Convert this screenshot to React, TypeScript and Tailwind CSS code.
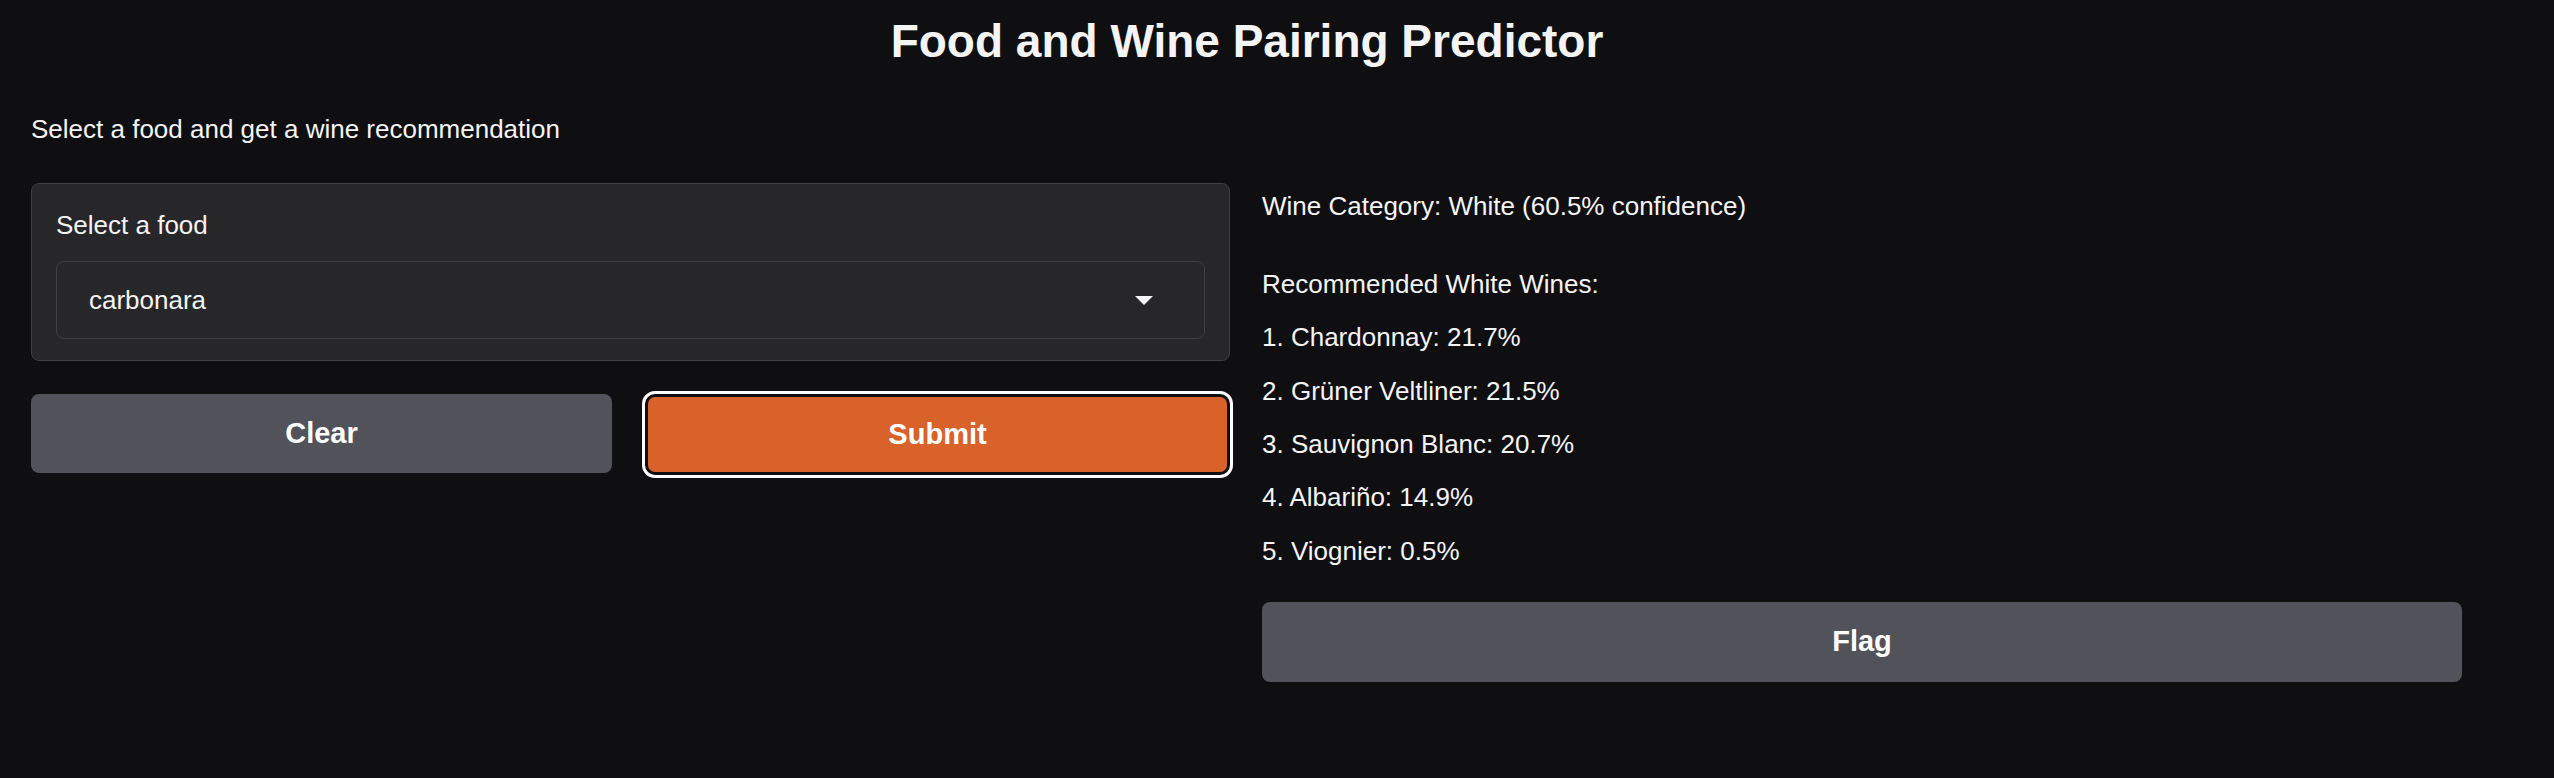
import React from "react";

const wines = [
  "1. Chardonnay: 21.7%",
  "2. Grüner Veltliner: 21.5%",
  "3. Sauvignon Blanc: 20.7%",
  "4. Albariño: 14.9%",
  "5. Viognier: 0.5%",
];

export default function App() {
  return (
    <div
      className="min-h-[778px] w-full bg-[#0f0f11] text-[#f4f4f5] px-[31px]"
      style={{ fontFamily: '"Liberation Sans", Arial, sans-serif' }}
    >
      <div className="w-[2432px]">
        <h1 className="pt-[14px] text-center text-[46px] leading-[55px] font-bold">
          Food and Wine Pairing Predictor
        </h1>
        <p className="mt-[42px] text-[26px] leading-[36px]">
          Select a food and get a wine recommendation
        </p>

        <div className="mt-[36px] grid grid-cols-[1199px_1201px] gap-[31px]">
          {/* Left column */}
          <div className="flex flex-col">
            <div className="rounded-[8px] border border-[#3f3f46] bg-[#27272a] px-[24px] pt-[23px] pb-[21px]">
              <div className="text-[26px] leading-[36px]">Select a food</div>
              <div className="mt-[18px] flex h-[78px] items-center justify-between rounded-[8px] border border-[#3f3f46] bg-[#27272a] pl-[32px] pr-[51px]">
                <span className="text-[26px] leading-[36px]">carbonara</span>
                <svg width="18" height="9" viewBox="0 0 18 9" aria-hidden="true">
                  <path d="M0 0 H18 L9 9 Z" fill="#f4f4f5" />
                </svg>
              </div>
            </div>

            <div className="mt-[33px] flex items-start gap-[36px]">
              <button className="flex h-[79px] w-[581px] items-center justify-center rounded-[8px] bg-[#52525b] text-[29px] font-bold text-white">
                Clear
              </button>
              <button className="mt-[3px] flex h-[75px] w-[579px] items-center justify-center rounded-[7px] bg-[#d9622b] text-[29px] font-bold text-white outline-3 outline-white outline-offset-3">
                Submit
              </button>
            </div>
          </div>

          {/* Right column */}
          <div className="flex flex-col pt-[5px] pl-[1px]">
            <div className="text-[26px] leading-[36px]">
              Wine Category: White (60.5% confidence)
            </div>
            <div className="mt-[42px] text-[26px] leading-[36px]">
              Recommended White Wines:
            </div>
            {wines.map((w) => (
              <div key={w} className="mt-[17.33px] text-[26px] leading-[36px]">
                {w}
              </div>
            ))}
            <button className="mt-[33.33px] flex h-[80px] w-full items-center justify-center rounded-[8px] bg-[#52525b] text-[29px] font-bold text-white">
              Flag
            </button>
          </div>
        </div>
      </div>
    </div>
  );
}
